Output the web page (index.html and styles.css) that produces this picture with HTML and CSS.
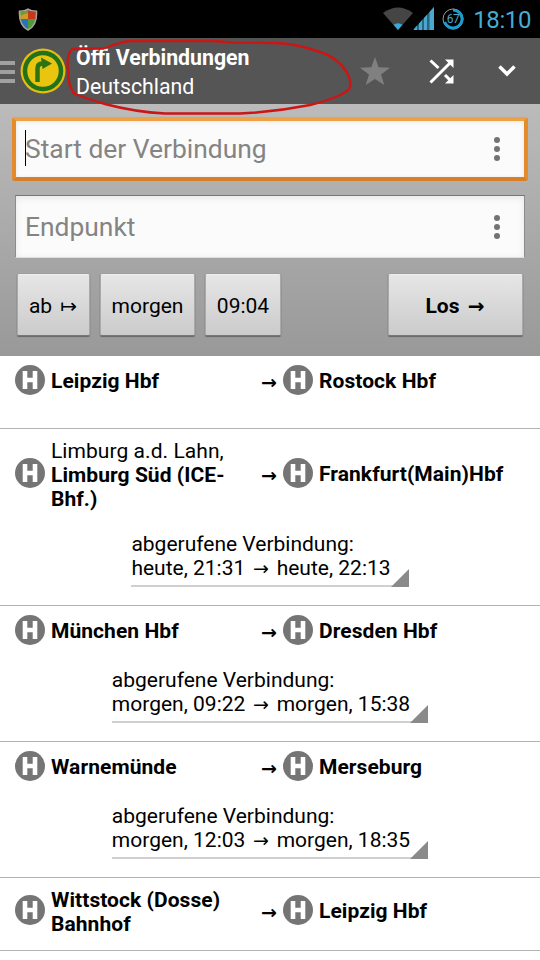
FILE: index.html
```html
<!DOCTYPE html>
<html lang="de">
<head>
  <meta charset="UTF-8">
  <meta name="viewport" content="width=device-width, initial-scale=1.0">
  <title>Öffi Verbindungen</title>
  <link rel="stylesheet" href="styles.css">
</head>
<body>

<!-- Shared icons -->
<svg class="defs" width="0" height="0">
  <symbol id="station" viewBox="0 0 30 30">
    <circle cx="15" cy="15" r="15" fill="#757575"/>
    <path d="M10 6v18M20 6v18M10 15h10" fill="none" stroke="#fff" stroke-width="4.6"/>
  </symbol>
  <symbol id="dots" viewBox="0 0 6 24">
    <circle cx="3" cy="3" r="3"/><circle cx="3" cy="12" r="3"/><circle cx="3" cy="21" r="3"/>
  </symbol>
</svg>

<div class="statusbar">
  <svg class="shield" width="20" height="23" viewBox="0 0 20 23">
    <clipPath id="shield-clip"><path d="M10 2C7.500 3.500 5 4 2 4C1.500 12 3 18 10 21.500C17 18 18.500 12 18 4C15 4 12.500 3.500 10 2z"/></clipPath>
    <g clip-path="url(#shield-clip)">
      <path d="M0 0h10v11H0z" fill="#a5b52c"/><path d="M10 0h10v11H10z" fill="#c4391c"/>
      <path d="M0 11h10v12H0z" fill="#2b72bd"/><path d="M10 11h10v12H10z" fill="#4f9a3a"/>
      <path d="M2 4l8-2v4L3 9z" fill="#739a32"/><path d="M2 8l8-3v6H2z" fill="#cf9c22"/>
    </g>
    <path d="M10 1.200C7.500 3 5 3.300 1.500 3.300C1 12 2.500 18.500 10 22C17.500 18.500 19 12 18.500 3.300C15 3.300 12.500 3 10 1.200z" fill="none" stroke="#a9a49c" stroke-width="1.500"/>
  </svg>
  <div class="status-icons">
    <svg width="30" height="23" viewBox="0 0 30 23">
      <path d="M0 6Q15-5 30 6L15 23z" fill="#454545"/>
      <path d="M10.500 17.800Q15 14.500 19.500 17.800L15 23z" fill="#37a9d8"/>
    </svg>
    <svg class="signal" width="21" height="23" viewBox="0 0 21 23">
      <path d="M0 23L21 0v23z" fill="#26647f"/>
      <path d="M1 22l3-3.300V23H1zM6 16.500l3-3.300V23H6zM11 11l3-3.300V23h-3zM16.500 5L21 0v23h-4.500z" fill="#4aa7d0"/>
    </svg>
    <svg class="battery" width="22" height="22" viewBox="0 0 22 22">
      <circle cx="11" cy="11" r="10" fill="none" stroke="#999" stroke-width="1"/>
      <path d="M11 2A9 9 0 1 1 2.600 14" fill="none" stroke="#1f9ccc" stroke-width="3"/>
      <text x="11" y="15.200" text-anchor="middle">67</text>
    </svg>
    <span class="clock">18:10</span>
  </div>
</div>

<header class="actionbar">
  <svg class="drawer" width="15" height="23" viewBox="0 0 15 23">
    <path d="M0 2h15M0 11h15M0 20h15" stroke="#a0a0a0" stroke-width="4"/>
  </svg>
  <svg class="logo" width="46" height="46" viewBox="0 0 46 46">
    <circle cx="23" cy="23" r="22.500" fill="#e3bd12"/>
    <circle cx="23" cy="23" r="18" fill="#e9c510" stroke="#217218" stroke-width="4.500"/>
    <path d="M17.500 34V20.500q0-5 5-5H25" fill="none" stroke="#2b7414" stroke-width="4.500"/>
    <path d="M21 9.500L32 15.500L22.500 21z" fill="#2b7414"/>
  </svg>
  <div class="titles">
    <h1>Öffi Verbindungen</h1>
    <p>Deutschland</p>
  </div>
  <div class="actions">
    <svg width="30" height="28" viewBox="0 0 30 28">
      <path d="M15 0l3.600 10.300L30 10.700l-9 6.900L24.300 28L15 21.900L5.700 28L9 17.600L0 10.700l11.400-.4z" fill="#808080"/>
    </svg>
    <svg width="25" height="25" viewBox="0 0 25 25">
      <path d="M1.500 23.500L21 4M1.500 1.500L9.500 9M16 16l5.500 5.500" fill="none" stroke="#fff" stroke-width="3"/>
      <path d="M16 0.500h8.500V9zM24.500 16v8.500H16z" fill="#fff"/>
    </svg>
    <svg width="18" height="12" viewBox="0 0 18 12">
      <path d="M1.500 1.500L9 9l7.500-7.500" fill="none" stroke="#fff" stroke-width="3.500"/>
    </svg>
  </div>
</header>

<section class="search">
  <div class="field focused">
    <span class="cursor"></span>
    <span class="hint">Start der Verbindung</span>
    <svg class="more" width="6" height="24"><use href="#dots"/></svg>
  </div>
  <div class="field">
    <span class="hint">Endpunkt</span>
    <svg class="more" width="6" height="24"><use href="#dots"/></svg>
  </div>
  <div class="buttons">
    <button class="dep">ab <span class="arrow">↦</span></button>
    <button class="day">morgen</button>
    <button class="time">09:04</button>
    <button class="go">Los <span class="arrow">→</span></button>
  </div>
</section>

<main>
  <article class="entry">
    <div class="route">
      <svg class="station"><use href="#station"/></svg>
      <b>Leipzig Hbf</b>
      <span class="arrow">→</span>
      <svg class="station"><use href="#station"/></svg>
      <b>Rostock Hbf</b>
    </div>
  </article>

  <article class="entry tall">
    <div class="route">
      <svg class="station"><use href="#station"/></svg>
      <div>Limburg a.d. Lahn,<br><b>Limburg Süd (ICE-<br>Bhf.)</b></div>
      <span class="arrow">→</span>
      <svg class="station"><use href="#station"/></svg>
      <b>Frankfurt(Main)Hbf</b>
    </div>
    <div class="trip">abgerufene Verbindung:<br>heute, 21:31 <span class="arrow">→</span> heute, 22:13</div>
  </article>

  <article class="entry medium">
    <div class="route">
      <svg class="station"><use href="#station"/></svg>
      <b>München Hbf</b>
      <span class="arrow">→</span>
      <svg class="station"><use href="#station"/></svg>
      <b>Dresden Hbf</b>
    </div>
    <div class="trip">abgerufene Verbindung:<br>morgen, 09:22 <span class="arrow">→</span> morgen, 15:38</div>
  </article>

  <article class="entry medium">
    <div class="route">
      <svg class="station"><use href="#station"/></svg>
      <b>Warnemünde</b>
      <span class="arrow">→</span>
      <svg class="station"><use href="#station"/></svg>
      <b>Merseburg</b>
    </div>
    <div class="trip">abgerufene Verbindung:<br>morgen, 12:03 <span class="arrow">→</span> morgen, 18:35</div>
  </article>

  <article class="entry">
    <div class="route">
      <svg class="station"><use href="#station"/></svg>
      <div><b>Wittstock (Dosse)<br>Bahnhof</b></div>
      <span class="arrow">→</span>
      <svg class="station"><use href="#station"/></svg>
      <b>Leipzig Hbf</b>
    </div>
  </article>
</main>

<!-- Hand-drawn marker around the title -->
<svg class="marker" width="300" height="90" viewBox="60 35 300 90">
  <path d="M104 48.500L72 49Q66 55 68 70Q68 88 75 94Q88 99 105 104Q135 112 165 113.500L240 113.500Q275 112 310 105Q342 97 349 89Q353 83 346 71Q337 57 320 52Q295 43 273 43L232 42.500L214 41H130Q120 42 104 48.500"/>
</svg>

</body>
</html>
```

FILE: styles.css
```css
* {
  box-sizing: border-box;
}

body {
  margin: 0;
  width: 540px;
  height: 960px;
  overflow: hidden;
  position: relative;
  background: #fff;
  color: #000;
  font-family: Roboto, "DejaVu Sans", sans-serif;
  font-size: 21px;
  line-height: 24px;
}

svg {
  display: block;
  flex-shrink: 0;
}

.defs {
  position: absolute;
}

.arrow {
  font-family: "DejaVu Sans", sans-serif;
  font-size: 20px;
  line-height: 20px;
}

/* Status bar */
.statusbar {
  height: 38px;
  padding: 0 9px 0 18px;
  display: flex;
  align-items: center;
  justify-content: space-between;
  background: #000;
}

.status-icons {
  display: flex;
  align-items: center;
}

.status-icons svg {
  margin-bottom: 1px;
}

.signal {
  margin-right: 8px;
}

.battery text {
  font-size: 12px;
  letter-spacing: -0.5px;
  fill: #4aa7d0;
}

.clock {
  margin-left: 9px;
  font-size: 24px;
  letter-spacing: -0.4px;
  padding-top: 2px;
  color: #45acd6;
}

/* Action bar */
.actionbar {
  height: 66px;
  display: flex;
  align-items: center;
  background: #555;
  color: #fff;
}

.drawer {
  margin-top: 2px;
}

.logo {
  margin-left: 5px;
}

.titles {
  margin-left: 10px;
  padding-top: 1px;
}

.titles h1,
.titles p {
  margin: 0;
  font-size: 21.3px;
  line-height: 29px;
}

.actions {
  display: flex;
  align-items: center;
  gap: 39px;
  margin-left: auto;
  padding-right: 24px;
}

.actions svg:last-child {
  margin-left: 5px;
}

/* Search form */
.search {
  height: 252px;
  padding: 13px 12px 0;
  background: linear-gradient(#bbb, #999);
}

.field {
  display: flex;
  align-items: center;
  height: 63px;
  margin: 14px 3px 0;
  padding: 0 24px 0 9px;
  background: #fbfbfb;
  border: 1px solid #8c8c8c;
  border-top-color: #777;
  border-bottom-color: #ddd;
  box-shadow: inset 0 2px 6px #e6e6e6;
}

.field.focused {
  position: relative;
  height: 64px;
  margin: 0;
  padding: 0 24px 0 9px;
  border: 4px solid;
  border-color: #eea045 #e58b2a #d87f28;
  border-radius: 3px;
  box-shadow: inset 0 1px 4px #e6e6e6;
}

.cursor {
  position: absolute;
  left: 9px;
  top: 9px;
  width: 1px;
  height: 36px;
  background: #000;
}

.hint {
  font-size: 26.4px;
  line-height: 32px;
  color: #848484;
}

.more {
  margin-left: auto;
  fill: #737373;
}

.buttons {
  display: flex;
  margin: 16px 5px 0;
}

button {
  height: 62px;
  padding: 2px 0 0;
  margin: 0 10px 0 0;
  border: 1px solid #aaa;
  border-top-color: #eee;
  border-bottom-color: #777;
  border-radius: 2px;
  background: linear-gradient(#e6e6e6, #cbcbcb);
  box-shadow: 0 1px 1px #666, 0 0 1px #666;
  font: inherit;
}

button .arrow {
  margin: 0 1px 0 3px;
}

.dep {
  width: 73px;
}

.day {
  width: 95px;
}

.time {
  width: 76px;
}

.go {
  width: 135px;
  margin: 0 0 0 auto;
  font-weight: bold;
}

/* History list */
.entry {
  display: flex;
  flex-direction: column;
  justify-content: space-between;
  height: 73px;
  padding: 8px 15px 18px;
  border-bottom: 1px solid #b3b3b3;
}

.entry.medium {
  height: 136px;
}

.entry.tall {
  height: 177px;
}

.route {
  display: grid;
  grid-template-columns: 36px 210px 22px 36px 1fr;
  align-items: center;
  min-height: 32px;
}

.route > b {
  padding-top: 2px;
  letter-spacing: 0.06px;
}

.route > div {
  padding-top: 2px;
  margin-bottom: -2px;
  letter-spacing: 0.06px;
}

.route .arrow {
  padding-top: 3px;
  font-weight: bold;
  font-size: 19px;
}

.station {
  width: 30px;
  height: 30px;
}

.trip {
  position: relative;
  align-self: center;
  padding: 0 18px 5px 0;
  border-bottom: 2px solid #d0d0d0;
}

.trip .arrow {
  font-size: 19px;
  margin: 0 2.5px;
}

/* Spinner corner */
.trip::after {
  content: "";
  position: absolute;
  right: 0;
  bottom: -2px;
  border: 9px solid;
  border-color: transparent #8a8a8a #8a8a8a transparent;
}

.marker {
  position: absolute;
  left: 60px;
  top: 35px;
  fill: none;
  stroke: #cc1515;
  stroke-width: 2.4;
}
```
